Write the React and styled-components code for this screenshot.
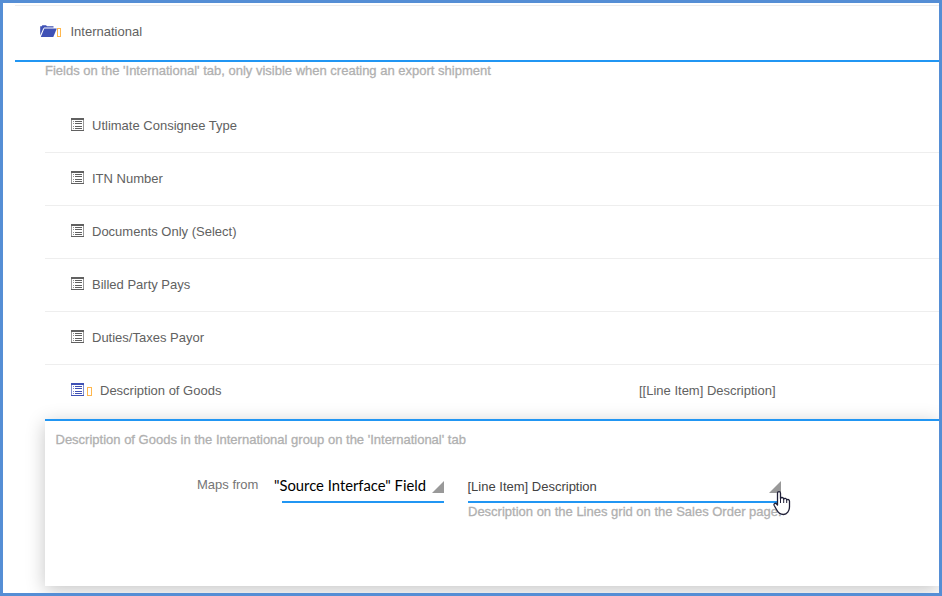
import React from "react";
import styled, { createGlobalStyle } from "styled-components";

const GlobalStyle = createGlobalStyle`
  *, *::before, *::after { box-sizing: border-box; }
  body { margin: 0; background: #fff; }
  svg { display: block; flex: none; }
`;

const Frame = styled.main`
  width: 942px;
  height: 596px;
  border: 3px solid #558ed5;
  padding: 2px 0 0 12px;
  overflow: hidden;
  background: #fff;
  font-family: "Liberation Sans", Arial, sans-serif;
  font-size: 13px;
  line-height: 16px;
  color: #616161;
  white-space: nowrap;
`;

const GroupHeader = styled.header`
  display: flex;
  align-items: center;
  height: 57px;
  padding: 0 0 3px 25px;
  border-top: 1px solid #eee;
  border-bottom: 2px solid #2196f3;
`;

const GroupName = styled.span`
  margin-left: 9.5px;
`;

const Hint = styled.p`
  margin: 0;
  padding-top: ${(p) => p.$drop || 0}px;
  color: #b0b0b0;
  -webkit-text-stroke: 0.3px #b0b0b0;
`;

const GroupBody = styled.section`
  padding-left: 30px;
`;

const FieldList = styled.ul`
  list-style: none;
  margin: 0;
  padding: 21px 0 0;
`;

const FieldRow = styled.li`
  display: flex;
  align-items: center;
  height: 53px;
  padding: 0 0 0 26px;
  border-bottom: 1px solid ${(p) => (p.$open ? "transparent" : "#eee")};
`;

const FieldLabel = styled.span`
  flex: none;
  width: ${(p) => (p.$open ? "539px" : "auto")};
  margin-left: 8px;
`;

const FieldValue = styled.span`
  color: #616161;
`;

const MissingGlyph = styled.i`
  flex: none;
  width: ${(p) => p.$width || 4}px;
  height: 9px;
  margin: ${(p) => p.$drop || 0}px 0 0 ${(p) => p.$gap || 0}px;
  border: 1px solid #ffb74d;
`;

const Panel = styled.section`
  height: 167px;
  margin-top: 1px;
  padding: 11px 0 0 10.5px;
  border-top: 2px solid #2196f3;
  background: #fff;
  box-shadow: 0 4px 18px rgba(0, 0, 0, 0.23);
`;

const MappingRow = styled.div`
  display: flex;
  align-items: flex-start;
  padding: 27px 0 0 141.5px;
`;

const MappingLabel = styled.label`
  width: 77px;
  padding-top: 2px;
  color: #757575;
`;

const SelectGroup = styled.div`
  width: ${(p) => p.$width}px;
  margin-left: ${(p) => p.$gap}px;
`;

const SelectBox = styled.div`
  display: flex;
  justify-content: space-between;
  align-items: flex-start;
  height: 28px;
  padding-top: 4px;
  border-bottom: 2px solid #2196f3;
  color: #424242;
`;

const SourceName = styled.span`
  margin: -2px 0 0 -8px;
  font-family: Lato, sans-serif;
  font-size: 14.8px;
  line-height: 16px;
  color: #000;
`;

const SelectedField = styled.span`
  margin-left: -0.5px;
`;

const Corner = styled.i`
  flex: none;
  width: 12px;
  height: 12px;
  margin-top: 2px;
  background: #999;
  clip-path: polygon(100% 0, 100% 100%, 0 100%);
`;

const Pointer = styled.svg`
  position: absolute;
  left: 773px;
  top: 490px;
`;

const FieldGlyph = styled.svg`
  margin-bottom: 3px;
`;

function FolderIcon() {
  return (
    <svg width="17" height="13" viewBox="0 0 17 13" fill="#3f51b5">
      <path d="M0.2 10.5V1.2H1.8L2.3 0.2H6L7 1.2H13.5V2.6H4.2L3 4.1Z" />
      <path d="M4.3 3.4H16.8L13.3 12H0.8Z" />
    </svg>
  );
}

function FieldIcon({ color = "#616161" }) {
  return (
    <FieldGlyph width="13" height="13" viewBox="0 0 13 13" fill={color} shapeRendering="crispEdges">
      <path d="M0 0H13V2H0ZM0 12H13V13H0Z" />
      <path d="M0 2H1V12H0ZM12 2H13V12H12Z" opacity=".65" />
      <path d="M2 3H3V4H2ZM2 5H3V6H2ZM2 8H3V9H2ZM2 10H3V11H2Z" opacity=".7" />
      <path d="M4 3H11V4H4ZM4 5H11V6H4ZM4 8H11V9H4ZM4 10H11V11H4Z" />
    </FieldGlyph>
  );
}

const fields = [
  "Utlimate Consignee Type",
  "ITN Number",
  "Documents Only (Select)",
  "Billed Party Pays",
  "Duties/Taxes Payor",
];

export default function App() {
  return (
    <Frame>
      <GlobalStyle />
      <GroupHeader>
        <FolderIcon />
        <MissingGlyph $drop={2} />
        <GroupName>International</GroupName>
      </GroupHeader>
      <GroupBody>
        <Hint $drop={1}>Fields on the 'International' tab, only visible when creating an export shipment</Hint>
        <FieldList>
          {fields.map((name) => (
            <FieldRow key={name}>
              <FieldIcon />
              <FieldLabel>{name}</FieldLabel>
            </FieldRow>
          ))}
          <FieldRow $open>
            <FieldIcon color="#3f51b5" />
            <MissingGlyph $gap={3} $width={5} $drop={1} />
            <FieldLabel $open>Description of Goods</FieldLabel>
            <FieldValue>[[Line Item] Description]</FieldValue>
          </FieldRow>
        </FieldList>
        <Panel>
          <Hint>Description of Goods in the International group on the 'International' tab</Hint>
          <MappingRow>
            <MappingLabel>Maps from</MappingLabel>
            <SelectGroup $width={162} $gap={8}>
              <SelectBox>
                <SourceName>"Source Interface" Field</SourceName>
                <Corner />
              </SelectBox>
            </SelectGroup>
            <SelectGroup $width={313} $gap={24}>
              <SelectBox>
                <SelectedField>[Line Item] Description</SelectedField>
                <Corner />
              </SelectBox>
              <Hint $drop={1}>Description on the Lines grid on the Sales Order page.</Hint>
            </SelectGroup>
          </MappingRow>
        </Panel>
      </GroupBody>
      <Pointer width="18" height="26" viewBox="0 0 18 26">
        <path
          d="M4.5 15V3.2C4.5 1 7.5 1 7.5 3.2V8.5C8 7 10.5 7.2 10.7 9C11.5 8 13.4 8.2 13.7 9.8C15 9 16.5 9.8 16.5 11.3V16.5C16.5 21 14 24.5 10.5 24.5C7 24.5 5 22.5 3.8 20L1.2 15.5C0.3 13.8 2.5 12.5 3.6 14Z"
          fill="#fff"
          stroke="#202038"
          strokeWidth="1.3"
          strokeLinejoin="round"
        />
        <path d="M7.5 8.5V13M10.7 9V13M13.7 9.8V13" stroke="#202038" strokeWidth="1" />
      </Pointer>
    </Frame>
  );
}
